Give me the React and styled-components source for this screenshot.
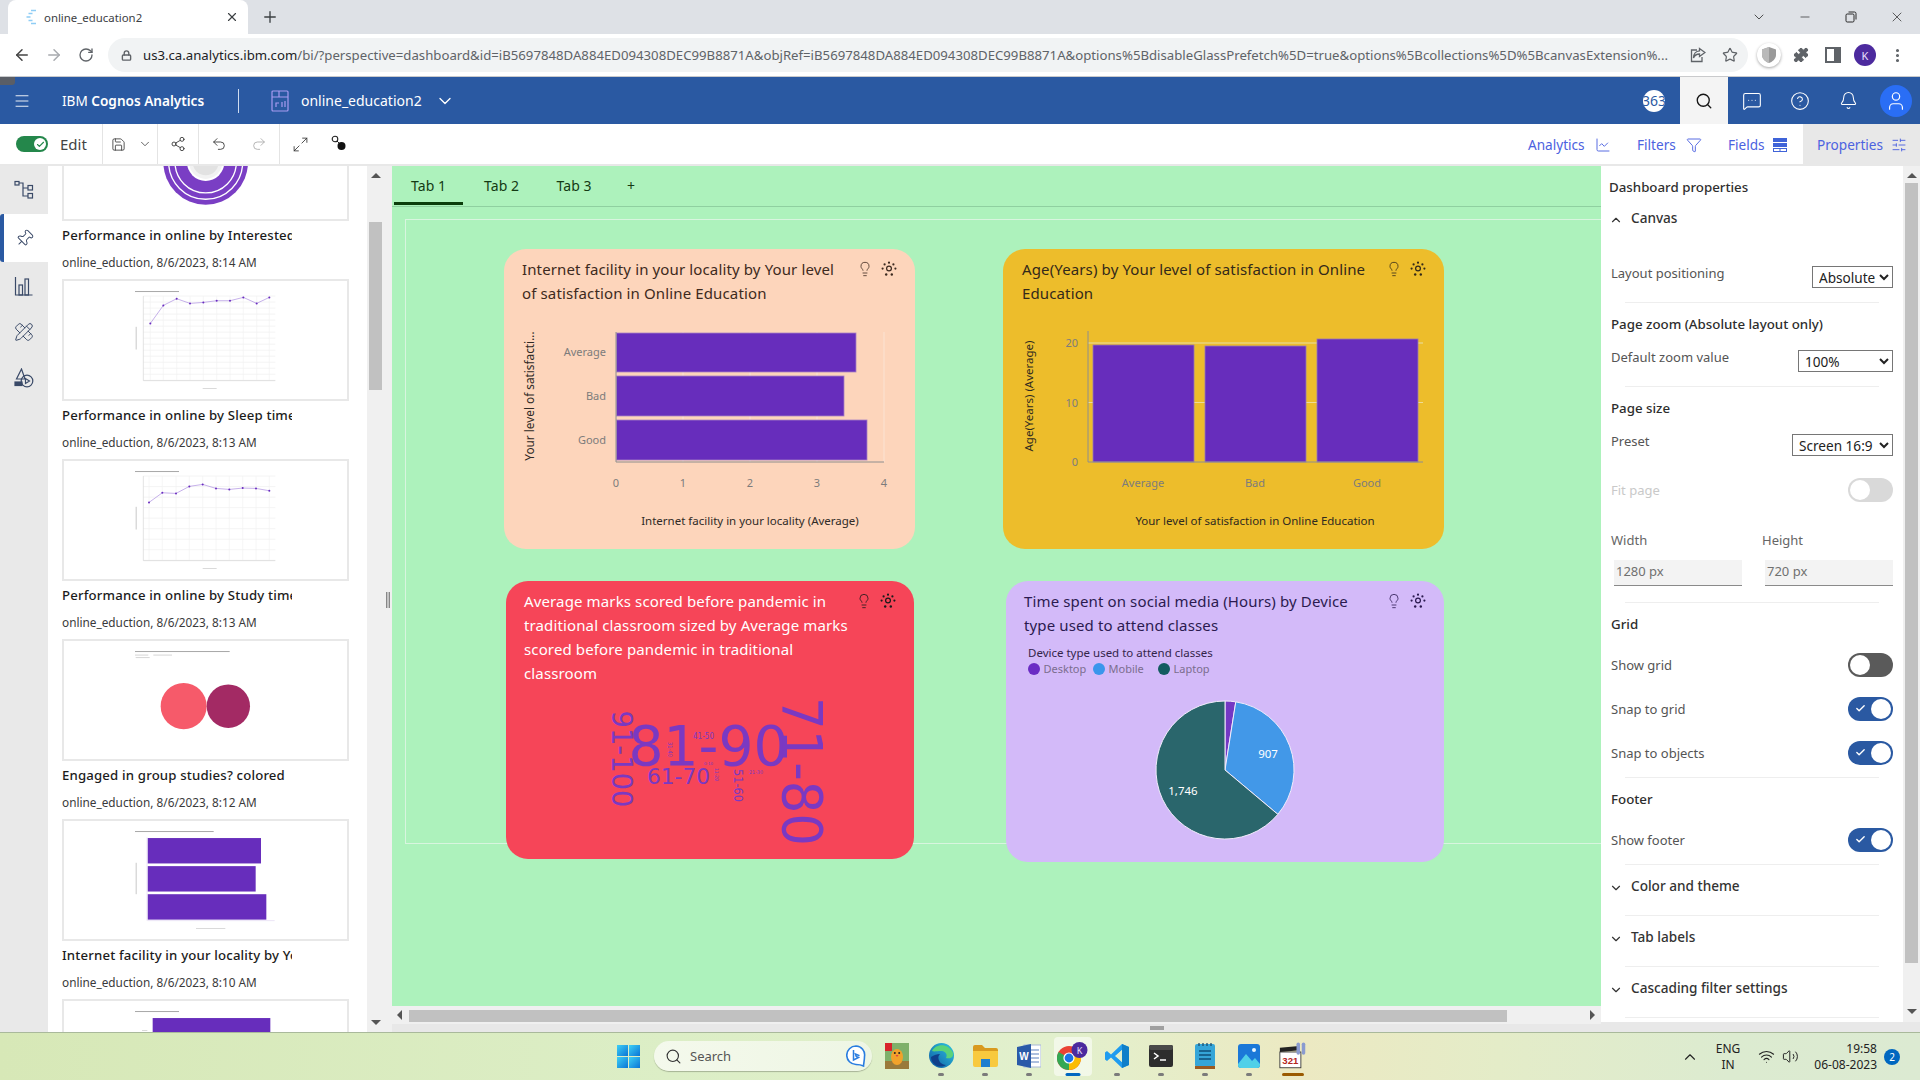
import React from 'react';
import styled, { createGlobalStyle } from 'styled-components';
import {
  ArrowLeft, ArrowRight, RotateCw, Lock, Star, Puzzle, EllipsisVertical, Plus, X, ChevronDown, ChevronUp, Minus,
  Menu, Search, MessageSquareMore, CircleHelp, Bell, User, Save, Share2, Undo2, Maximize2, Pin, PencilRuler,
  Lightbulb, Wifi, Volume2, Check, ChartLine, Funnel, SlidersHorizontal,
} from 'lucide-react';

const SANS = '"Noto Sans", "Open Sans", sans-serif';

const Global = createGlobalStyle`
  html, body { margin: 0; padding: 0; background: #fff; overflow: hidden; }
  #root { width: 1920px; height: 1080px; }
  * { box-sizing: border-box; }
  body { font-family: ${SANS}; }
`;

const Shell = styled.div`
  width: 1920px; height: 1080px; display: flex; flex-direction: column; overflow: hidden; font-family: ${SANS};
`;

/* Browser chrome */
const TabStrip = styled.div`
  height: 34px; background: #dee1e6; display: flex; align-items: stretch; flex: none;
`;
const BrowserTab = styled.div`
  width: 240px; margin-left: 8px; background: #fff; border-radius: 8px 8px 0 0; display: flex; align-items: center;
  padding: 0 9px 0 17px; font-size: 11.4px; color: #3c4043; gap: 7px;
`;
const TabTitle = styled.span` flex: 1; white-space: nowrap; `;
const NewTab = styled.div`
  width: 22px; margin-left: 11px; display: flex; align-items: center; justify-content: center; color: #3c4043;
`;
const Grow = styled.div` flex: 1; `;
const WinButton = styled.div`
  width: ${p => p.$w || 46}px; display: flex; align-items: center; justify-content: center; color: #2a2a2a;
`;
const ChromeBar = styled.div`
  height: 43px; flex: none; background: #fff; border-bottom: 1px solid #c9cacc; display: flex; align-items: center; padding-left: 6px;
`;
const NavBtn = styled.div`
  width: 32px; height: 32px; display: flex; align-items: center; justify-content: center; color: ${p => p.$c || '#5f6368'}; flex: none;
`;
const Address = styled.div`
  width: 1640px; height: 34px; margin: 0 5px 0 6px; background: #f1f3f4; border-radius: 17px; display: flex; align-items: center;
  padding: 0 10px 0 13px; flex: none;
`;
const Url = styled.div`
  flex: 1; margin: 0 17px 0 11px; font-size: 13.2px; white-space: nowrap; overflow: hidden; color: #5f6368; min-width: 0;
  b { font-weight: 400; color: #202124; }
`;
const AddrIcon = styled.span` display: flex; margin-left: ${p => p.$ml || 0}px; color: #5f6368; `;
const ShieldWrap = styled.div`
  width: 24px; height: 24px; border-radius: 50%; background: #fff; box-shadow: 0 1px 3px rgba(0,0,0,.35); display: flex; align-items: center; justify-content: center;
`;
const Avatar = styled.div`
  width: 22px; height: 22px; border-radius: 50%; background: #4c2a9e; color: #e8e0ff; font-size: 11px; display: flex; align-items: center; justify-content: center;
`;

/* App header */
const AppHeader = styled.header`
  height: 47px; flex: none; background: #2a59a2; color: #fff; display: flex; align-items: center; position: relative;
`;
const NotchTag = styled.div`
  position: absolute; left: 0; top: 0; width: 15px; height: 8px; background: #5a5e66; border-radius: 0 0 3px 0;
`;
const Hamburger = styled.div` width: 62px; padding-left: 13px; display: flex; `;
const Brand = styled.div`
  width: 176px; font-size: 13.6px; white-space: nowrap; b { font-weight: 600; }
`;
const HeadSep = styled.div` width: 1px; height: 24px; background: #cfdcf0; `;
const DashIcon = styled.div` margin-left: 32px; width: 18px; display: flex; `;
const DashName = styled.div` margin-left: 12px; font-size: 14px; white-space: nowrap; width: 134px; `;
const Counter = styled.div`
  width: 22px; height: 22px; border-radius: 50%; background: #fff; color: #2a59a2; font-size: 14px; overflow: hidden;
  display: flex; align-items: center; justify-content: center; margin-right: 15px;
`;
const HeadBtn = styled.div`
  width: 48px; height: 47px; display: flex; align-items: center; justify-content: center; flex: none;
  background: ${p => (p.$on ? '#f4f4f4' : 'transparent')}; color: ${p => (p.$on ? '#161616' : '#fff')};
`;
const UserDisc = styled.div`
  width: 32px; height: 32px; border-radius: 50%; background: #2a6ef5; display: flex; align-items: center; justify-content: center;
`;

/* Toolbar */
const Toolbar = styled.div`
  height: 42px; flex: none; background: #fff; border-bottom: 2px solid #e8e8e8; display: flex; align-items: stretch;
`;
const ToolGroup = styled.div`
  width: ${p => p.$w}px; flex: none; display: flex; align-items: center; border-right: ${p => (p.$plain ? 'none' : '1px solid #e4e4e4')};
  padding-left: ${p => p.$pl || 0}px; gap: ${p => p.$gap || 0}px; color: #333;
`;
const EditSwitch = styled.div`
  width: 32px; height: 16px; border-radius: 8px; background: #24874b; position: relative; flex: none;
`;
const EditKnob = styled.div`
  position: absolute; right: 2px; top: 2px; width: 12px; height: 12px; border-radius: 50%; background: #fff; color: #24874b;
  display: flex; align-items: center; justify-content: center;
`;
const EditLabel = styled.span` margin-left: 12px; font-size: 15px; color: #444; `;
const ToolLink = styled.div`
  display: flex; align-items: center; color: #4c62e0; font-size: 13.6px; flex: none; width: ${p => p.$w}px; gap: 8px; padding: 1px 0 0 ${p => p.$pl || 0}px;
  background: ${p => (p.$on ? '#e8e8e8' : 'transparent')}; span { flex: 1; white-space: nowrap; }
`;
const LinkIcon = styled.div` display: flex; flex: none; margin-right: ${p => p.$mr}px; `;

/* Main */
const Main = styled.div` flex: 1; display: flex; min-height: 0; `;
const Rail = styled.nav` width: 48px; flex: none; background: #e9e9e9; display: flex; flex-direction: column; `;
const RailItem = styled.div`
  height: 48px; display: flex; align-items: center; justify-content: center; color: #3a4a68; flex: none; margin-top: ${p => p.$mt || 0}px;
  background: ${p => (p.$on ? '#fff' : 'transparent')}; border-left: ${p => (p.$on ? '4px solid #2a59a2' : 'none')};
  padding-right: ${p => (p.$on ? 4 : 0)}px; border-radius: ${p => (p.$on ? '3px 0 0 3px' : '0')};
`;
const Library = styled.div` width: 319px; flex: none; background: #fff; overflow: hidden; padding: 0 18px 0 14px; `;
const LibraryList = styled.div` margin-top: -67px; `;
const LibItem = styled.article` height: 180px; `;
const Thumb = styled.div` height: 122px; border: 2px solid #e8e8e8; background: #fff; overflow: hidden; svg { display: block; } `;
const LibTitle = styled.div`
  height: 28px; line-height: 28px; width: 230px; overflow: hidden; white-space: nowrap; font-size: 13.2px; font-weight: 500; color: #1c1c1c; letter-spacing: .17px;
`;
const LibMeta = styled.div`
  height: 26px; line-height: 26px; font-size: 11.8px; color: #3a3a3a; white-space: nowrap;
`;
const VScroll = styled.div`
  width: 17px; flex: none; background: #f0f0f0; position: relative; display: flex; flex-direction: column; align-items: center;
`;
const ScrollArrow = styled.div`
  width: 0; height: 0; border-left: 5px solid transparent; border-right: 5px solid transparent; flex: none;
  ${p => (p.$down ? 'border-top: 5px solid #555;' : 'border-bottom: 5px solid #555;')}
  margin-top: ${p => p.$mt}px;
`;
const VThumb = styled.div` width: 13px; height: ${p => p.$h}px; margin-top: ${p => p.$mt}px; background: #c1c1c1; flex: none; `;
const Splitter = styled.div` width: 8px; flex: none; background: #f0f0f0; display: flex; flex-direction: column; align-items: center; padding-top: 426px; `;
const Grip = styled.div` width: 4px; height: 16px; border-left: 1px solid #888; border-right: 1px solid #888; background: #c4c4c4; `;

/* Canvas */
const CanvasCol = styled.div` width: 1209px; flex: none; display: flex; flex-direction: column; `;
const TabsRow = styled.div`
  height: 41px; flex: none; background: #adf2bc; border-bottom: 1px solid #8fd0a0; display: flex; padding-left: 2px;
`;
const DashTab = styled.div`
  width: ${p => p.$w || 72}px; margin-left: ${p => p.$ml || 0}px; height: 39px; padding-top: 2px; display: flex; align-items: center; justify-content: center; font-size: 14px; color: #143a14; flex: none;
  border-bottom: ${p => (p.$on ? '3px solid #0b3d0b' : '3px solid transparent')};
`;
const Stage = styled.div` flex: 1; background: #adf2bc; position: relative; overflow: hidden; `;
const PageFrame = styled.div`
  position: absolute; left: 13px; top: 12px; width: 1400px; height: 625px; border: 1px solid #d8f5df; border-right: none;
`;
const Card = styled.section`
  position: absolute; left: ${p => p.$x - 392}px; top: ${p => p.$y - 207}px; width: ${p => p.$w}px; height: ${p => p.$h}px;
  background: ${p => p.$bg}; border-radius: 22px; color: ${p => p.$fg}; display: flex; flex-direction: column; overflow: hidden;
`;
const CardHead = styled.div`
  height: ${p => p.$h}px; flex: none; display: flex; padding: ${p => p.$pt}px 18px 0 ${p => p.$pl || 18}px; gap: 8px;
`;
const CardTitle = styled.h3`
  flex: 1; margin: 0; font-size: 15px; font-weight: 400; line-height: 24px; white-space: nowrap; letter-spacing: .13px;
`;
const CardIcon = styled.div` width: 16px; height: 16px; margin-top: 4px; flex: none; color: ${p => p.$c}; display: flex; `;
const ChartSvg = styled.svg` flex: 1; width: 100%; min-height: 0; display: block; font-family: ${SANS}; `;
const HScroll = styled.div` height: 18px; flex: none; background: #f0f0f0; padding-top: 4px; position: relative; `;
const HThumb = styled.div` margin-left: 17px; width: 1098px; height: 12px; background: #c1c1c1; `;
const HArrow = styled.div`
  position: absolute; top: 4px; ${p => (p.$right ? 'right: 6px; border-left: 5px solid #555;' : 'left: 5px; border-right: 5px solid #555;')}
  width: 0; height: 0; border-top: 5px solid transparent; border-bottom: 5px solid transparent;
`;
const BottomGrip = styled.div`
  height: 8px; flex: none; background: #e8e8e8; display: flex; justify-content: center; align-items: center; padding-left: 320px;
  &::after { content: ''; width: 14px; height: 4px; background: #a0a0a0; }
`;

/* Properties */
const PropsCol = styled.div` flex: 1; display: flex; flex-direction: column; min-width: 0; `;
const PropsBody = styled.div` height: 856px; flex: none; display: flex; `;
const PropsFoot = styled.div` flex: 1; background: #e8e8e8; `;
const Props = styled.aside` width: 302px; flex: none; background: #fff; overflow: hidden; `;
const PropsTitle = styled.div`
  height: 42px; line-height: 42px; padding-left: 8px; font-size: 13.3px; font-weight: 500; color: #2f2f2f;
`;
const SectionHead = styled.div`
  height: ${p => p.$h}px; display: flex; padding: ${p => p.$pt}px 0 0 8px; font-size: 13.6px; font-weight: 500; color: #333; line-height: 18px;
  span { margin-left: 8px; }
  svg { margin-top: 4px; flex: none; }
`;
const SubHead = styled.div`
  height: 42px; line-height: 42px; padding-left: 10px; font-size: 13.3px; font-weight: 500; color: #2d2d2d;
`;
const Row = styled.div`
  height: ${p => p.$h || 22}px; margin-top: ${p => p.$mt || 0}px; padding: 0 10px; display: flex; justify-content: space-between;
  align-items: ${p => (p.$center ? 'center' : 'flex-start')};
`;
const RowLabel = styled.label`
  font-size: 13px; line-height: ${p => (p.$top ? 14 : 16)}px; color: ${p => (p.$off ? '#c9c9c9' : '#555')}; white-space: nowrap;
`;
const Sel = styled.select`
  width: ${p => p.$w}px; height: 22px; font-family: ${SANS}; font-size: 13.6px; color: #222; background: #fff; border: 1px solid #767676; border-radius: 0; padding: 0 0 0 2px;
`;
const Rule = styled.div` height: 1px; margin: ${p => p.$mt}px 24px 0; background: #eeeeee; `;
const SizeGrid = styled.div` display: grid; grid-template-columns: 128px 128px; column-gap: 23px; padding: 0 0 0 13px; `;
const SizeLabel = styled.div` height: 20px; margin: 28px 0 10px -3px; line-height: 20px; font-size: 13px; color: #666; `;
const SizeInput = styled.div`
  height: 26px; background: #f3f3f3; border-bottom: 1px solid #8a8a8a; font-size: 13px; color: #707070; padding: 0 0 4px 2px; display: flex; align-items: center;
`;
const Toggle = styled.div`
  width: 45px; height: 24px; border-radius: 12px; position: relative; flex: none;
  background: ${p => ({ on: '#2a59a2', off: '#5a5a5a', dis: '#d9d9d9' }[p.$s])};
`;
const Knob = styled.div`
  position: absolute; top: 2px; width: 20px; height: 20px; border-radius: 50%; background: #fff;
  ${p => (p.$s === 'on' ? 'right: 2px;' : 'left: 2px;')}
`;
const ToggleTick = styled.div` position: absolute; left: 7px; top: 6px; color: #fff; display: flex; `;

/* Taskbar */
const Taskbar = styled.footer`
  height: 48px; flex: none; display: flex; align-items: stretch; border-top: 1px solid #a9b99b;
  background: linear-gradient(90deg, #d7e8b7 0%, #dceec6 35%, #e2f0cd 55%, #ece9c2 68%, #e4ecc8 78%, #dcebd0 90%, #dcead2 100%);
`;
const StartBtn = styled.div` margin-left: 614px; width: 28px; display: flex; align-items: center; justify-content: center; `;
const TaskSearch = styled.div`
  width: 218px; height: 30px; margin: 8px 3px 0 12px; border-radius: 15px; background: linear-gradient(90deg,#f4f9ec,#eef6e4); box-shadow: 0 1px 1px rgba(0,0,0,.25);
  display: flex; align-items: center; padding: 0 6px 0 11px; gap: 8px; font-size: 13px; color: #555; flex: none;
  span { flex: 1; }
`;
const AppSlot = styled.div`
  width: 44px; flex: none; display: flex; align-items: center; justify-content: center; position: relative; padding-bottom: 2px;
`;
const AppTile = styled.div`
  position: absolute; left: 3px; right: 3px; top: 4px; bottom: 4px; background: rgba(255,255,255,.55); border-radius: 4px;
`;
const AppLift = styled.span` position: relative; display: flex; `;
const AppDot = styled.div`
  position: absolute; bottom: 4px; left: 50%; transform: translateX(-50%); height: 3px; border-radius: 2px;
  width: ${p => p.$w || 6}px; background: ${p => p.$c || '#7b7b7b'};
`;
const Tray = styled.div`
  margin-left: auto; display: flex; align-items: center; color: #222; font-size: 12px;
`;
const TrayIcon = styled.div` width: ${p => p.$w}px; display: flex; justify-content: center; flex: none; margin-left: ${p => p.$ml || 0}px; `;
const LangBox = styled.div` width: 40px; margin-left: 9px; text-align: center; line-height: 16px; `;
const Clock = styled.div` width: 75px; margin-left: 2px; text-align: right; line-height: 16px; `;
const Badge = styled.div`
  width: 16px; height: 16px; border-radius: 50%; background: #0067c0; color: #fff; font-size: 10px; display: flex; align-items: center; justify-content: center;
  margin: 0 20px 0 7px;
`;

/* Small drawn icons */
const GearDots = ({ c = 'currentColor' }) => (
  <svg width="16" height="16" viewBox="0 0 16 16" fill={c}>
    <circle cx="8" cy="7.5" r="2.4" fill="none" stroke={c} strokeWidth="1.2" />
    <circle cx="8" cy="1.7" r="1.1" /><circle cx="3.6" cy="3.4" r="1.1" /><circle cx="12.4" cy="3.4" r="1.1" />
    <circle cx="1.6" cy="7.6" r="1.1" /><circle cx="14.4" cy="7.6" r="1.1" /><circle cx="5.2" cy="13.5" r="1.2" /><circle cx="10.8" cy="13.5" r="1.2" />
  </svg>
);
const Favicon = () => (
  <svg width="12" height="16" viewBox="0 0 12 16" fill="none" stroke="#8fcdf5" strokeWidth="1.6">
    <path d="M6 1.5h5M3.5 4.5h4M1.5 8h4M3.5 11.5h4M6 14.5h5" />
  </svg>
);
const ShareBox = () => (
  <svg width="16" height="16" viewBox="0 0 16 16" fill="none" stroke="#5f6368" strokeWidth="1.3">
    <path d="M7 3H1.5v11.5H12V10" /><path d="M9.5 1.5L15 5.5 9.5 9.5V7C6.5 7 4.5 8.5 3.5 11c0-4 2.5-7 6-7.2z" />
  </svg>
);
const Shield = () => (
  <svg width="14" height="16" viewBox="0 0 14 16"><path d="M7 0 L14 2.5 V8 C14 12 10 15 7 16 C4 15 0 12 0 8 V2.5Z" fill="#9a9a9a" /><path d="M7 0 V16 C4 15 0 12 0 8 V2.5Z" fill="#b9b9b9" /></svg>
);
const SidePanel = () => (
  <svg width="16" height="16" viewBox="0 0 16 16"><path d="M1 1h14v14H1z" fill="none" stroke="#5f6368" strokeWidth="2" /><rect x="9" y="1" width="6" height="14" fill="#5f6368" /></svg>
);
const DashGlyph = () => (
  <svg width="18" height="24" viewBox="0 0 18 24" fill="none" stroke="#a79bf0" strokeWidth="1.2">
    <rect x="1" y="2" width="16" height="20" rx="1" /><path d="M1 8h16M8 2v6M5 18v-4h3M11 18v-5M14 18v-6" />
  </svg>
);
const NodeGlyph = () => (
  <svg width="16" height="18" viewBox="0 0 16 18"><circle cx="4" cy="4" r="2.8" fill="none" stroke="#222" strokeWidth="1.1" /><path d="M6 6l3 3" stroke="#222" /><circle cx="10.5" cy="11" r="4" fill="#111" /></svg>
);
const FieldsGlyph = () => (
  <svg width="14" height="14" viewBox="0 0 14 14" fill="#3f63d8"><rect width="14" height="4" /><rect y="5" width="14" height="4" /><path d="M0 10h14v4H0zM1 11v2h5.5v-2zM7.5 11v2H13v-2z" fillRule="evenodd" /></svg>
);
const TreeGlyph = () => (
  <svg width="20" height="20" viewBox="0 0 20 20" fill="none" stroke="#3a4a68" strokeWidth="1.2">
    <rect x="1" y="1.5" width="4" height="3.5" /><path d="M5 3h4v13h5M9 8h5" /><rect x="14" y="5.5" width="4.5" height="4.5" /><rect x="14" y="13.5" width="4.5" height="4.5" />
  </svg>
);
const BarsGlyph = () => (
  <svg width="20" height="20" viewBox="0 0 20 20" fill="none" stroke="#3a4a68" strokeWidth="1.2">
    <path d="M1.5 1v18h17" /><rect x="5" y="9" width="3.5" height="10" /><rect x="11" y="3" width="3.5" height="16" />
  </svg>
);
const ShapesGlyph = () => (
  <svg width="20" height="20" viewBox="0 0 20 20" fill="none" stroke="#3a4a68" strokeWidth="1.2">
    <path d="M7.5 1L2.5 11h8.5z" /><rect x="1" y="14" width="7" height="3.5" fill="#3a4a68" /><circle cx="13" cy="13" r="5.8" /><path d="M11.5 10.5v5l4-2.5z" />
  </svg>
);
const Win11 = () => (
  <svg width="23" height="23" viewBox="0 0 23 23"><defs><linearGradient id="w" x1="0" y1="0" x2="1" y2="1"><stop offset="0" stopColor="#3dd0f5" /><stop offset="1" stopColor="#0a74d6" /></linearGradient></defs>
    <rect width="11" height="11" fill="url(#w)" /><rect x="12" width="11" height="11" fill="url(#w)" /><rect y="12" width="11" height="11" fill="url(#w)" /><rect x="12" y="12" width="11" height="11" fill="url(#w)" /></svg>
);
const BingGlyph = () => (
  <svg width="20" height="22" viewBox="0 0 20 22" fill="none"><path d="M10 1a9 9 0 0 1 8.5 10.5c0 4-1 7.5-1 9.5-2-1-4-1.5-7.5-1.5A9 9 0 0 1 10 1z" stroke="#2a7de0" strokeWidth="1.6" fill="#fff" /><path d="M7.5 5v10l5-2.5-2.4-1.2L9.5 9l4 1.8" stroke="#2a7de0" strokeWidth="1.5" /></svg>
);
const ChickApp = () => (
  <svg width="24" height="26" viewBox="0 0 24 26"><rect width="24" height="26" fill="#7fb06a" /><rect y="18" width="24" height="8" fill="#9a7a3a" /><ellipse cx="12" cy="14" rx="6" ry="8" fill="#f2a22a" /><circle cx="9.8" cy="10" r="1" fill="#222" /><circle cx="14.2" cy="10" r="1" fill="#222" /><path d="M10.5 12h3l-1.5 2z" fill="#d44" /><rect width="7" height="8" fill="#d8232a" /></svg>
);
const EdgeApp = () => (
  <svg width="25" height="25" viewBox="0 0 25 25"><defs><linearGradient id="e1" x1="0" y1="1" x2="1" y2="0"><stop offset="0" stopColor="#0c59a4" /><stop offset="1" stopColor="#2fc7e0" /></linearGradient></defs>
    <circle cx="12.5" cy="12.5" r="12.5" fill="url(#e1)" /><path d="M3 8C6 1 19-1 24 10c1 5-4 6-7 5 2-4-1-7-5-7-4 0-7 1-9 0z" fill="#5ad27a" /><path d="M11 11c-4 4 0 11 6 11-6 4-15 0-15-8 3-2 6-3 9-3z" fill="#0f3f8a" /></svg>
);
const FolderApp = () => (
  <svg width="25" height="22" viewBox="0 0 25 22"><path d="M0 2a2 2 0 0 1 2-2h7l3 3h11a2 2 0 0 1 2 2v2H0z" fill="#d99a1f" /><path d="M0 6h25v14a2 2 0 0 1-2 2H2a2 2 0 0 1-2-2z" fill="#f8c93e" /><rect x="8" y="14" width="9" height="8" fill="#1f7fcf" /></svg>
);
const WordApp = () => (
  <svg width="24" height="24" viewBox="0 0 24 24" fontFamily="Liberation Sans, sans-serif"><rect x="7" y="1" width="17" height="22" fill="#fff" stroke="#a8b8d8" /><path d="M13 6h9M13 10h9M13 14h9M13 18h9" stroke="#5a80c0" strokeWidth="1.2" /><path d="M0 3l14-3v24L0 21z" fill="#2a5aa8" /><text x="7" y="16" fill="#fff" fontSize="10" fontWeight="700" textAnchor="middle">W</text></svg>
);
const ChromeApp = () => (
  <svg width="32" height="28" viewBox="0 0 32 28"><g transform="translate(0,3)">
    <circle cx="12" cy="13" r="12" fill="#ea4335" /><path d="M12 13L1.6 7A12 12 0 0 0 12 25z" fill="#34a853" /><path d="M12 13l10.4-6A12 12 0 0 1 12 25z" fill="#fbbc05" /><circle cx="12" cy="13" r="5.6" fill="#fff" /><circle cx="12" cy="13" r="4.4" fill="#1a73e8" /></g>
    <circle cx="22.5" cy="8" r="8" fill="#4c2a9e" /><text x="22.5" y="11.5" fill="#e8e0ff" fontSize="9" textAnchor="middle" fontFamily="Noto Sans, sans-serif">K</text></svg>
);
const VsApp = () => (
  <svg width="24" height="24" viewBox="0 0 24 24"><path d="M17 0l7 3v18l-7 3L6 13.5 2 17l-2-1.5V8.5L2 7l4 3.5z" fill="#1f9cf0" /><path d="M17 6v12l-7-6z" fill="#e2f0cd" /><path d="M17 0l7 3v18l-7 3z" fill="#0f7fc9" /><path d="M17 6v12l-6-6z" fill="#e2f0cd" /></svg>
);
const TermApp = () => (
  <svg width="24" height="24" viewBox="0 0 24 24"><rect y="1" width="24" height="22" rx="2" fill="#2d2d2d" /><rect y="1" width="24" height="5" rx="2" fill="#4a4a4a" /><path d="M5 9l4 3-4 3" stroke="#fff" strokeWidth="1.5" fill="none" /><path d="M11 16h6" stroke="#fff" strokeWidth="1.5" /></svg>
);
const NoteApp = () => (
  <svg width="20" height="26" viewBox="0 0 20 26"><rect y="1" width="20" height="23" rx="2" fill="#35a5d8" /><path d="M4 0v3M8 0v3M12 0v3M16 0v3" stroke="#1c4e70" strokeWidth="1.3" /><path d="M4 8h12M4 12h12M4 16h12" stroke="#0f4f78" strokeWidth="1.5" /><rect y="23" width="20" height="3" fill="#9a5a22" /></svg>
);
const PhotoApp = () => (
  <svg width="22" height="24" viewBox="0 0 22 24"><rect width="22" height="24" rx="3" fill="#1b78d8" /><path d="M0 20l8-10 6 7 3-3 5 6v1a3 3 0 0 1-3 3H3a3 3 0 0 1-3-3z" fill="#4fd0e8" /><circle cx="16" cy="6" r="2" fill="#e8f6ff" /></svg>
);
const ClapApp = () => (
  <svg width="28" height="27" viewBox="0 0 32 30" fontFamily="Liberation Sans, sans-serif"><rect x="1" y="11" width="24" height="18" fill="#fff" stroke="#333" /><path d="M1 6l22-2 1 5-23 2z" fill="#222" /><text x="13" y="25" fontSize="11" fontWeight="700" textAnchor="middle" fill="#b3261e">321</text><rect x="20" y="0" width="4" height="14" rx="2" fill="#8a9bd0" /><rect x="26" y="0" width="4" height="14" rx="2" fill="#8a9bd0" /></svg>
);

/* Library thumbnails, drawn in 3x thumbnail space */
const ThumbSvg = ({ children }) => (
  <svg width="283" height="118" viewBox="192 363 849 353" preserveAspectRatio="none">{children}</svg>
);
const MiniTitle = ({ w = 132 }) => <rect x="405" y="393" width={w} height="3" fill="#a8a8a8" />;
const LineThumb = ({ pts, rows = 14 }) => {
  const ys = Array.from({ length: rows + 1 }, (_, i) => 408 + (i * 252) / rows);
  const xs = pts.map(p => p[0]);
  return (
    <ThumbSvg>
      <MiniTitle />
      <rect x="608" y="684" width="42" height="2" fill="#c8c8c8" />
      <rect x="407" y="500" width="3" height="68" fill="#c8c8c8" />
      {ys.map(y => <line key={y} x1="430" x2="826" y1={y} y2={y} stroke="#eeeeee" strokeWidth="2" />)}
      {xs.map(x => <line key={x} x1={x} x2={x} y1="408" y2="660" stroke="#f1f1f1" strokeWidth="2" />)}
      <line x1="430" x2="826" y1="661" y2="661" stroke="#d5d5d5" strokeWidth="2" />
      <line x1="430" x2="430" y1="408" y2="661" stroke="#d5d5d5" strokeWidth="2" />
      <polyline points={pts.map(p => p.join(',')).join(' ')} fill="none" stroke="#a98ae0" strokeWidth="2" />
      {pts.map(p => <circle key={p[0]} cx={p[0]} cy={p[1]} r="3" fill="#6a2cc0" />)}
    </ThumbSvg>
  );
};
const DonutThumb = () => (
  <ThumbSvg>
    <circle cx="617" cy="546" r="127" fill="#7a3ec4" />
    <circle cx="617" cy="546" r="111" fill="none" stroke="#fff" strokeWidth="4" />
    <circle cx="617" cy="546" r="92" fill="none" stroke="#fff" strokeWidth="4" />
    <circle cx="617" cy="546" r="56" fill="#fff" />
    <circle cx="617" cy="546" r="50" fill="#f2f2f2" />
    <circle cx="617" cy="546" r="39" fill="#e2e2e2" />
  </ThumbSvg>
);
const BubbleThumb = () => (
  <ThumbSvg>
    <MiniTitle w={284} />
    <rect x="405" y="404" width="40" height="2" fill="#c0c0c0" /><rect x="460" y="404" width="56" height="2" fill="#c0c0c0" />
    <rect x="407" y="412" width="42" height="2" fill="#c0c0c0" />
    <circle cx="551" cy="558" r="69" fill="#f65a6a" />
    <circle cx="685" cy="558" r="65" fill="#a32a64" />
  </ThumbSvg>
);
const BarThumb = () => (
  <ThumbSvg>
    <MiniTitle w={236} />
    <rect x="443" y="414" width="340" height="76" fill="#672dbc" />
    <rect x="443" y="498" width="324" height="76" fill="#672dbc" />
    <rect x="443" y="582" width="356" height="76" fill="#672dbc" />
    <line x1="442" x2="824" y1="661" y2="661" stroke="#e2d8f2" strokeWidth="2" />
    <line x1="441" x2="441" y1="412" y2="661" stroke="#e2d8f2" strokeWidth="2" />
    <rect x="407" y="488" width="3" height="94" fill="#c8c8c8" />
    <rect x="588" y="684" width="88" height="2" fill="#c8c8c8" />
  </ThumbSvg>
);
const BarThumb2 = () => (
  <ThumbSvg>
    <MiniTitle />
    <rect x="458" y="414" width="353" height="200" fill="#672dbc" />
    <rect x="426" y="450" width="16" height="2" fill="#c8c8c8" />
  </ThumbSvg>
);

const LIB = [
  ['Performance in online by Interested', '8:14 AM', <DonutThumb key="d" />],
  ['Performance in online by Sleep time', '8:13 AM', <LineThumb key="l1" pts={[[451, 490], [490, 436], [530, 416], [570, 430], [610, 427], [650, 422], [690, 422], [730, 412], [770, 430], [808, 412]]} />],
  ['Performance in online by Study time', '8:13 AM', <LineThumb key="l2" rows={8} pts={[[447, 487], [487, 458], [528, 460], [568, 439], [608, 433], [648, 445], [688, 448], [728, 444], [768, 445], [808, 452]]} />],
  ['Engaged in group studies? colored', '8:12 AM', <BubbleThumb key="b" />],
  ['Internet facility in your locality by Your', '8:10 AM', <BarThumb key="t" />],
  [null, null, <BarThumb2 key="t2" />],
];

/* Charts, drawn in page coordinates through the viewBox */
const AXIS = '#8e8e8e';
const TICK = '#7c7c7c';
const ChartText = ({ x, y, children, anchor = 'middle', size = 11, fill = TICK, rotate }) => (
  <text
    x={rotate ? 0 : x} y={rotate ? 0 : y - 1}
    transform={rotate ? `translate(${x} ${y}) rotate(${rotate})` : undefined}
    textAnchor={anchor} dominantBaseline="central" fontSize={size} fill={fill}
  >{children}</text>
);

const InternetChart = ({ vb }) => (
  <ChartSvg viewBox={vb}>
    {[683, 750, 817, 884].map(x => <line key={x} x1={x} x2={x} y1="332" y2="462" stroke="#fbe3d3" />)}
    {[[333, 372, 856], [376, 416, 844], [420, 460, 867]].map(([a, b, r]) => (
      <rect key={a} x="616.5" y={a} width={r - 616.5} height={b - a} fill="#672dbc" stroke="#a77fc4" strokeWidth=".8" />
    ))}
    <path d="M616 332V462H884" fill="none" stroke={AXIS} />
    <ChartText x={606} y={352} anchor="end">Average</ChartText>
    <ChartText x={606} y={396} anchor="end">Bad</ChartText>
    <ChartText x={606} y={440} anchor="end">Good</ChartText>
    {[0, 1, 2, 3, 4].map(t => <ChartText key={t} x={616 + t * 67} y={483}>{t}</ChartText>)}
    <ChartText x={529} y={396} rotate={-90} size={11.8} fill="#2f2a26">Your level of satisfacti...</ChartText>
    <ChartText x={750} y={521} size={11.5} fill="#2f2a26">Internet facility in your locality (Average)</ChartText>
  </ChartSvg>
);

const AgeChart = ({ vb }) => (
  <ChartSvg viewBox={vb}>
    <line x1="1088" x2="1423" y1="343" y2="343" stroke="#e8d57e" strokeWidth="1.6" />
    <line x1="1088" x2="1423" y1="402.5" y2="402.5" stroke="#eedc96" strokeWidth="1.2" />
    {[[1093, 345], [1205, 346], [1317, 339]].map(([x, y]) => (
      <rect key={x} x={x} y={y} width="101" height={462 - y} fill="#672dbc" stroke="#9a7ab0" strokeWidth=".8" />
    ))}
    <path d="M1088 331V462H1423" fill="none" stroke={AXIS} />
    <ChartText x={1078} y={343} anchor="end">20</ChartText>
    <ChartText x={1078} y={403} anchor="end">10</ChartText>
    <ChartText x={1078} y={462} anchor="end">0</ChartText>
    <ChartText x={1143} y={483}>Average</ChartText>
    <ChartText x={1255} y={483}>Bad</ChartText>
    <ChartText x={1367} y={483}>Good</ChartText>
    <ChartText x={1028} y={396} rotate={-90} size={11.5} fill="#2f2a20">Age(Years) (Average)</ChartText>
    <ChartText x={1255} y={521} size={11.5} fill="#2f2a20">Your level of satisfaction in Online Education</ChartText>
  </ChartSvg>
);

const WORDS = [
  ['81-90', 708.5, 745, 160, 56, 0],
  ['71-80', 802, 771.5, 149, 55, 90],
  ['91-100', 622, 759, 97, 29, 90],
  ['61-70', 678.5, 777, 63, 21, 0],
  ['41-50', 703.5, 736, 21, 8, 0],
  ['31-40', 670, 749.5, 15, 6, 90],
  ['51-60', 738, 785.5, 33, 12, 90],
  ['21-30', 756, 772, 14, 5, 0],
  ['11-20', 717, 774.5, 13, 5, 90],
  ['0-10', 708.5, 763, 9, 4, 0],
];
const WordSvg = styled(ChartSvg)` font-family: "DejaVu Sans", sans-serif; `;
const WordCloud = ({ vb }) => (
  <WordSvg viewBox={vb}>
    {WORDS.map(([w, x, y, len, size, rot]) => (
      <text key={w} transform={`translate(${x} ${y}) rotate(${rot})`} textAnchor="middle" dominantBaseline="central"
        fontSize={size} textLength={len} lengthAdjust="spacingAndGlyphs" fill="#7a39c2">{w}</text>
    ))}
  </WordSvg>
);

const polar = (a, r = 69) => {
  const t = ((a - 90) * Math.PI) / 180;
  return [1225 + r * Math.cos(t), 770 + r * Math.sin(t)];
};
const slice = (a, b) => {
  const [x1, y1] = polar(a);
  const [x2, y2] = polar(b);
  return `M1225 770L${x1} ${y1}A69 69 0 ${b - a > 180 ? 1 : 0} 1 ${x2} ${y2}Z`;
};
const PieChart = ({ vb }) => (
  <ChartSvg viewBox={vb}>
    <ChartText x={1028} y={653} anchor="start" size={11.5} fill="#33254a">Device type used to attend classes</ChartText>
    {[[1034, '#6a2cc4', 'Desktop'], [1099, '#3a96ec', 'Mobile'], [1164, '#135c60', 'Laptop']].map(([x, c, l]) => (
      <g key={l}>
        <circle cx={x} cy={669} r="6" fill={c} />
        <ChartText x={x + 9.5} y={669} anchor="start" size={11} fill="#7b6d8e">{l}</ChartText>
      </g>
    ))}
    <g stroke="#f1ecfb" strokeWidth="1">
      <path d={slice(0, 9)} fill="#7438c4" />
      <path d={slice(9, 130)} fill="#4298e8" />
      <path d={slice(130, 360)} fill="#2a666c" />
    </g>
    <ChartText x={1268} y={754} size={11.5} fill="#fff">907</ChartText>
    <ChartText x={1183} y={791} size={11.5} fill="#fff">1,746</ChartText>
  </ChartSvg>
);

const CARDS = [
  { x: 504, y: 249, w: 411, h: 300, bg: '#fdd5bb', fg: '#3d2a20', ic: '#3d2a20', head: 56, pt: 8, pl: 18, lines: ['Internet facility in your locality by Your level', 'of satisfaction in Online Education'], C: InternetChart },
  { x: 1003, y: 249, w: 441, h: 300, bg: '#edbd2b', fg: '#33291a', ic: '#33291a', head: 56, pt: 8, pl: 19, lines: ['Age(Years) by Your level of satisfaction in Online', 'Education'], C: AgeChart },
  { x: 506, y: 581, w: 408, h: 278, bg: '#f64558', fg: '#fff', ic: '#1a1a1a', head: 105, pt: 8, pl: 18, lines: ['Average marks scored before pandemic in', 'traditional classroom sized by Average marks', 'scored before pandemic in traditional', 'classroom'], C: WordCloud },
  { x: 1006, y: 581, w: 438, h: 281, bg: '#d3baf9', fg: '#2b1a50', ic: '#2b1a50', head: 57, pt: 8, pl: 18, lines: ['Time spent on social media (Hours) by Device', 'type used to attend classes'], C: PieChart },
];

const TOOL_LINK = { size: 16, strokeWidth: 1.4 };
const Tick = () => <ToggleTick><Check size={11} strokeWidth={3} /></ToggleTick>;

const App = () => (
  <Shell>
    <Global />
    <TabStrip>
      <BrowserTab>
        <Favicon />
        <TabTitle>online_education2</TabTitle>
        <X size={14} strokeWidth={2} />
      </BrowserTab>
      <NewTab><Plus size={18} strokeWidth={1.8} /></NewTab>
      <Grow />
      <WinButton $w={47}><ChevronDown size={16} strokeWidth={1.2} /></WinButton>
      <WinButton><Minus size={14} strokeWidth={1.2} /></WinButton>
      <WinButton>
        <svg width="12" height="12" viewBox="0 0 12 12" fill="none" stroke="#2a2a2a"><rect x="1" y="3" width="8" height="8" rx="1.2" /><path d="M3.5 1h6a1.5 1.5 0 0 1 1.5 1.5v6" /></svg>
      </WinButton>
      <WinButton><X size={16} strokeWidth={1.1} /></WinButton>
    </TabStrip>

    <ChromeBar>
      <NavBtn $c="#444"><ArrowLeft size={18} strokeWidth={2} /></NavBtn>
      <NavBtn $c="#a8abaf"><ArrowRight size={18} strokeWidth={2} /></NavBtn>
      <NavBtn><RotateCw size={16} strokeWidth={2} /></NavBtn>
      <Address>
        <AddrIcon><Lock size={11} strokeWidth={3} /></AddrIcon>
        <Url><b>us3.ca.analytics.ibm.com</b>/bi/?perspective=dashboard&amp;id=iB5697848DA884ED094308DEC99B8871A&amp;objRef=iB5697848DA884ED094308DEC99B8871A&amp;options%5BdisableGlassPrefetch%5D=true&amp;options%5Bcollections%5D%5BcanvasExtension%...</Url>
        <AddrIcon><ShareBox /></AddrIcon>
        <AddrIcon $ml={16}><Star size={16} strokeWidth={1.8} /></AddrIcon>
      </Address>
      <NavBtn><ShieldWrap><Shield /></ShieldWrap></NavBtn>
      <NavBtn><Puzzle size={16} fill="#5f6368" strokeWidth={1.5} /></NavBtn>
      <NavBtn><SidePanel /></NavBtn>
      <NavBtn><Avatar>K</Avatar></NavBtn>
      <NavBtn><EllipsisVertical size={17} strokeWidth={2.4} /></NavBtn>
    </ChromeBar>

    <AppHeader>
      <NotchTag />
      <Hamburger><Menu size={18} strokeWidth={1.2} /></Hamburger>
      <Brand>IBM <b>Cognos Analytics</b></Brand>
      <HeadSep />
      <DashIcon><DashGlyph /></DashIcon>
      <DashName>online_education2</DashName>
      <ChevronDown size={20} strokeWidth={1.6} />
      <Grow />
      <Counter>363</Counter>
      <HeadBtn $on><Search size={18} strokeWidth={1.8} /></HeadBtn>
      <HeadBtn><MessageSquareMore size={20} strokeWidth={1.3} /></HeadBtn>
      <HeadBtn><CircleHelp size={20} strokeWidth={1.3} /></HeadBtn>
      <HeadBtn><Bell size={19} strokeWidth={1.3} /></HeadBtn>
      <HeadBtn><UserDisc><User size={22} strokeWidth={1.3} /></UserDisc></HeadBtn>
    </AppHeader>

    <Toolbar>
      <ToolGroup $w={103} $pl={16}>
        <EditSwitch><EditKnob><Check size={9} strokeWidth={3} /></EditKnob></EditSwitch>
        <EditLabel>Edit</EditLabel>
      </ToolGroup>
      <ToolGroup $w={55} $pl={8} $gap={12}>
        <Save size={15} strokeWidth={1.3} /><ChevronDown size={14} strokeWidth={1.3} />
      </ToolGroup>
      <ToolGroup $w={41} $pl={12}><Share2 size={16} strokeWidth={1.3} /></ToolGroup>
      <ToolGroup $w={81} $pl={12} $gap={24}>
        <Undo2 size={16} strokeWidth={1.3} /><Undo2 size={16} strokeWidth={1.3} color="#aaa" transform="scale(-1 1)" />
      </ToolGroup>
      <ToolGroup $w={100} $pl={12} $gap={22} $plain>
        <Maximize2 size={17} strokeWidth={1.2} /><NodeGlyph />
      </ToolGroup>
      <Grow />
      <ToolLink $w={109}><span>Analytics</span><LinkIcon $mr={26}><ChartLine {...TOOL_LINK} /></LinkIcon></ToolLink>
      <ToolLink $w={91}><span>Filters</span><LinkIcon $mr={26}><Funnel {...TOOL_LINK} /></LinkIcon></ToolLink>
      <ToolLink $w={75}><span>Fields</span><LinkIcon $mr={20}><FieldsGlyph /></LinkIcon></ToolLink>
      <ToolLink $w={117} $pl={14} $on><span>Properties</span><LinkIcon $mr={14}><SlidersHorizontal {...TOOL_LINK} /></LinkIcon></ToolLink>
    </Toolbar>

    <Main>
      <Rail>
        <RailItem><TreeGlyph /></RailItem>
        <RailItem $on><Pin size={19} strokeWidth={1.2} transform="rotate(45)" /></RailItem>
        <RailItem><BarsGlyph /></RailItem>
        <RailItem $mt={-2}><PencilRuler size={20} strokeWidth={1.2} /></RailItem>
        <RailItem $mt={-2}><ShapesGlyph /></RailItem>
      </Rail>
      <Library>
        <LibraryList>
          {LIB.map(([title, time, art], i) => (
            <LibItem key={i}>
              <Thumb>{art}</Thumb>
              {title && <LibTitle>{title}</LibTitle>}
              {title && <LibMeta>online_eduction, 8/6/2023, {time}</LibMeta>}
            </LibItem>
          ))}
        </LibraryList>
      </Library>
      <VScroll>
        <ScrollArrow $mt={7} />
        <VThumb $mt={44} $h={168} />
        <ScrollArrow $down $mt={630} />
      </VScroll>
      <Splitter><Grip /></Splitter>

      <CanvasCol>
        <TabsRow>
          <DashTab $on $w={69}>Tab 1</DashTab>
          <DashTab $w={73} $ml={2}>Tab 2</DashTab>
          <DashTab $w={72}>Tab 3</DashTab>
          <DashTab $w={42}>+</DashTab>
        </TabsRow>
        <Stage>
          <PageFrame />
          {CARDS.map(c => {
            const Chart = c.C;
            return (
              <Card key={c.x + c.y} $x={c.x} $y={c.y} $w={c.w} $h={c.h} $bg={c.bg} $fg={c.fg}>
                <CardHead $h={c.head} $pt={c.pt} $pl={c.pl}>
                  <CardTitle>{c.lines.map((l, i) => <React.Fragment key={l}>{i > 0 && <br />}{l}</React.Fragment>)}</CardTitle>
                  <CardIcon $c={c.ic}><Lightbulb size={16} strokeWidth={1.2} /></CardIcon>
                  <CardIcon $c={c.ic}><GearDots /></CardIcon>
                </CardHead>
                <Chart vb={`${c.x} ${c.y + c.head} ${c.w} ${c.h - c.head}`} />
              </Card>
            );
          })}
        </Stage>
        <HScroll><HArrow /><HThumb /><HArrow $right /></HScroll>
        <BottomGrip />
      </CanvasCol>

      <PropsCol>
        <PropsBody>
          <Props>
            <PropsTitle>Dashboard properties</PropsTitle>
            <SectionHead $h={20} $pt={1}><ChevronUp size={14} strokeWidth={2} /><span>Canvas</span></SectionHead>
            <Row $mt={38}><RowLabel $top>Layout positioning</RowLabel><Sel $w={81} defaultValue="a"><option value="a">Absolute</option></Sel></Row>
            <Rule $mt={14} />
            <SubHead>Page zoom (Absolute layout only)</SubHead>
            <Row $mt={5}><RowLabel $top>Default zoom value</RowLabel><Sel $w={95} defaultValue="a"><option value="a">100%</option></Sel></Row>
            <Rule $mt={14} />
            <SubHead>Page size</SubHead>
            <Row $mt={5}><RowLabel $top>Preset</RowLabel><Sel $w={101} defaultValue="a"><option value="a">Screen 16:9</option></Sel></Row>
            <Row $mt={22} $h={24} $center><RowLabel $off>Fit page</RowLabel><Toggle $s="dis"><Knob $s="dis" /></Toggle></Row>
            <SizeGrid>
              <SizeLabel>Width</SizeLabel><SizeLabel>Height</SizeLabel>
              <SizeInput>1280 px</SizeInput><SizeInput>720 px</SizeInput>
            </SizeGrid>
            <Rule $mt={16} />
            <SubHead>Grid</SubHead>
            <Row $mt={8} $h={24} $center><RowLabel>Show grid</RowLabel><Toggle $s="off"><Knob $s="off" /></Toggle></Row>
            <Row $mt={20} $h={24} $center><RowLabel>Snap to grid</RowLabel><Toggle $s="on"><Tick /><Knob $s="on" /></Toggle></Row>
            <Row $mt={20} $h={24} $center><RowLabel>Snap to objects</RowLabel><Toggle $s="on"><Tick /><Knob $s="on" /></Toggle></Row>
            <Rule $mt={12} />
            <SubHead>Footer</SubHead>
            <Row $mt={8} $h={24} $center><RowLabel>Show footer</RowLabel><Toggle $s="on"><Tick /><Knob $s="on" /></Toggle></Row>
            <Rule $mt={12} />
            <SectionHead $h={50} $pt={12}><ChevronDown size={14} strokeWidth={2} /><span>Color and theme</span></SectionHead>
            <Rule $mt={0} />
            <SectionHead $h={50} $pt={12}><ChevronDown size={14} strokeWidth={2} /><span>Tab labels</span></SectionHead>
            <Rule $mt={0} />
            <SectionHead $h={50} $pt={12}><ChevronDown size={14} strokeWidth={2} /><span>Cascading filter settings</span></SectionHead>
            <Rule $mt={0} />
          </Props>
          <VScroll>
            <ScrollArrow $mt={7} />
            <VThumb $mt={5} $h={780} />
            <ScrollArrow $down $mt={46} />
          </VScroll>
        </PropsBody>
        <PropsFoot />
      </PropsCol>
    </Main>

    <Taskbar>
      <StartBtn><Win11 /></StartBtn>
      <TaskSearch><Search size={17} strokeWidth={1.6} color="#333" /><span>Search</span><BingGlyph /></TaskSearch>
      <AppSlot><ChickApp /></AppSlot>
      <AppSlot><EdgeApp /><AppDot /></AppSlot>
      <AppSlot><FolderApp /><AppDot /></AppSlot>
      <AppSlot><WordApp /><AppDot /></AppSlot>
      <AppSlot><AppTile /><AppLift><ChromeApp /></AppLift><AppDot $c="#0067c0" $w={15} /></AppSlot>
      <AppSlot><VsApp /><AppDot /></AppSlot>
      <AppSlot><TermApp /><AppDot /></AppSlot>
      <AppSlot><NoteApp /><AppDot /></AppSlot>
      <AppSlot><PhotoApp /><AppDot /></AppSlot>
      <AppSlot><ClapApp /><AppDot $c="#9a5a00" $w={22} /></AppSlot>
      <Tray>
        <ChevronUp size={18} strokeWidth={1.5} />
        <LangBox>ENG<br />IN</LangBox>
        <TrayIcon $w={20} $ml={8}><Wifi size={17} strokeWidth={1.5} /></TrayIcon>
        <TrayIcon $w={20} $ml={4}><Volume2 size={17} strokeWidth={1.4} /></TrayIcon>
        <Clock>19:58<br />06-08-2023</Clock>
        <Badge>2</Badge>
      </Tray>
    </Taskbar>
  </Shell>
);

export default App;
